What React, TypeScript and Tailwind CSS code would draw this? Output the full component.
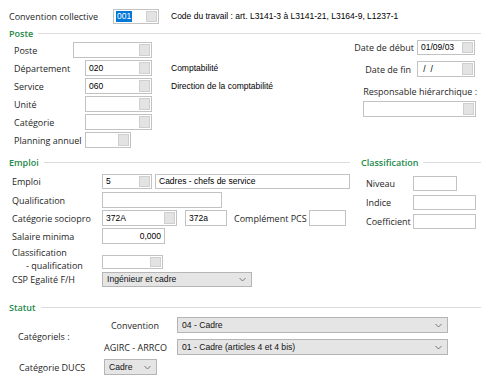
import React from 'react';
import clsx from 'clsx';

const lbl = "text-[9px] leading-none text-[#262626] whitespace-nowrap";
const val = "font-['Liberation_Sans',Arial,sans-serif] text-[8.5px] leading-none text-black whitespace-nowrap";
const sel = "font-['Liberation_Sans',Arial,sans-serif] text-[8.6px] leading-none text-[#111] whitespace-nowrap";

type BoxProps = { className?: string; btn?: boolean; right?: boolean; children?: React.ReactNode };

// lookup field, with the little grey button on the right
const Box: React.FC<BoxProps> = ({ className, btn, right, children }) => (
  <div className={clsx("flex items-stretch h-full border border-[#c2c2c2] bg-white", className)}>
    <div className={clsx("flex-1 flex items-center px-[3px] overflow-hidden", val, right && "justify-end")}>{children}</div>
    {btn && <div className="w-[11px] my-[1px] mr-[1px] border border-[#cfcfcf] bg-[#e3e3e3]" />}
  </div>
);

const Select: React.FC<{ className?: string; children?: React.ReactNode }> = ({ className, children }) => (
  <div className={clsx("flex items-center h-full border border-[#b5b5b5] bg-[#e5e5e5] pl-[4px] pr-[5px]", className)}>
    <span className={clsx("flex-1", sel)}>{children}</span>
    <svg width="7" height="5" viewBox="0 0 7 5" fill="none">
      <path d="M0.5 1 L3.5 4 L6.5 1" stroke="#6b6b6b" strokeWidth="0.9" />
    </svg>
  </div>
);

const Heading: React.FC<{ title: string; className?: string }> = ({ title, className }) => (
  <div className={clsx("flex items-center h-[12px]", className)}>
    <span className="text-[9px] leading-none font-semibold text-[#23894a]">{title}</span>
    <div className="flex-1 h-px bg-[#dcdcdc] ml-[5px]" />
  </div>
);

export default function App() {
  return (
    <div className="w-[489px] h-[381px] bg-white overflow-hidden font-['Open_Sans','Noto_Sans',sans-serif]">
      {/* Convention collective */}
      <div className="flex items-center h-[15px] mt-[9px] pl-[9px]">
        <span className={clsx(lbl, "w-[104px]")}>Convention collective</span>
        <div className="flex items-stretch h-full w-[46px] border border-[#c2c2c2] bg-white">
          <div className="flex-1 flex items-center pl-[2px]">
            <span className={clsx(val, "bg-[#0078d7] text-white px-[1px] py-[1px]")}>001</span>
          </div>
          <div className="w-[11px] my-[1px] mr-[1px] border border-[#cfcfcf] bg-[#e3e3e3]" />
        </div>
        <span className={clsx(val, "ml-[12px]")}>Code du travail : art. L3141-3 à L3141-21, L3164-9, L1237-1</span>
      </div>

      {/* Poste */}
      <Heading title="Poste" className="mt-[3px] pl-[9px] pr-[8px]" />
      <div className="flex h-[117px]">
        <div className="w-[360px] pt-[3px] pl-[14px] flex flex-col gap-[2px]">
          <div className="flex items-center h-[16px]">
            <span className={clsx(lbl, "w-[59px]")}>Poste</span>
            <Box className="w-[79px]" btn />
          </div>
          <div className="flex items-center h-[16px]">
            <span className={clsx(lbl, "w-[71px]")}>Département</span>
            <Box className="w-[67px]" btn>020</Box>
            <span className={clsx(val, "ml-[19px]")}>Comptabilité</span>
          </div>
          <div className="flex items-center h-[16px]">
            <span className={clsx(lbl, "w-[71px]")}>Service</span>
            <Box className="w-[67px]" btn>060</Box>
            <span className={clsx(val, "ml-[19px]")}>Direction de la comptabilité</span>
          </div>
          <div className="flex items-center h-[16px]">
            <span className={clsx(lbl, "w-[71px]")}>Unité</span>
            <Box className="w-[67px]" btn />
          </div>
          <div className="flex items-center h-[16px]">
            <span className={clsx(lbl, "w-[71px]")}>Catégorie</span>
            <Box className="w-[67px]" btn />
          </div>
          <div className="flex items-center h-[16px]">
            <span className={clsx(lbl, "w-[71px]")}>Planning annuel</span>
            <Box className="w-[46px]" btn />
          </div>
        </div>
        <div className="flex-1 pt-[1px] flex flex-col">
          <div className="flex items-center justify-end h-[15px] pr-[14px]">
            <span className={lbl}>Date de début</span>
            <Box className="w-[58px] ml-[3px]" btn>01/09/03</Box>
          </div>
          <div className="flex items-center justify-end h-[16px] mt-[6px] pr-[14px]">
            <span className={lbl}>Date de fin</span>
            <Box className="w-[58px] ml-[6px]" btn>&nbsp;/&nbsp;&nbsp;/</Box>
          </div>
          <div className="h-[12px] mt-[8px] pl-[9px] flex items-center">
            <span className={lbl}>Responsable hiérarchique :</span>
          </div>
          <div className="h-[16px] mt-[4px] pl-[9px]">
            <Box className="w-[113px]" btn />
          </div>
        </div>
      </div>

      {/* Emploi + Classification */}
      <div className="flex h-[145px]">
        <div className="w-[355px] flex flex-col">
          <Heading title="Emploi" className="pl-[9px] pr-[5px]" />
          <div className="flex items-center h-[15px] mt-[6px] pl-[12px]">
            <span className={clsx(lbl, "w-[90px]")}>Emploi</span>
            <Box className="w-[50px]" btn>5</Box>
            <Box className="w-[195px] ml-[3px]">Cadres - chefs de service</Box>
          </div>
          <div className="flex items-center h-[16px] mt-[3px] pl-[12px]">
            <span className={clsx(lbl, "w-[90px]")}>Qualification</span>
            <Box className="w-[120px]" />
          </div>
          <div className="flex items-center h-[16px] mt-[2px] pl-[12px]">
            <span className={clsx(lbl, "w-[90px]")}>Catégorie sociopro</span>
            <Box className="w-[75px]" btn>372A</Box>
            <Box className="w-[42px] ml-[8px]">372a</Box>
            <span className={clsx(lbl, "w-[75px] ml-[7px]")}>Complément PCS</span>
            <Box className="w-[37px]" />
          </div>
          <div className="flex items-center h-[16px] mt-[2px] pl-[12px]">
            <span className={clsx(lbl, "w-[90px]")}>Salaire minima</span>
            <Box className="w-[63px]" right>0,000</Box>
          </div>
          <div className="flex items-end h-[24px] mt-[3px] pl-[12px]">
            <div className={clsx(lbl, "w-[90px] flex flex-col gap-[4px] self-stretch justify-center")}>
              <span>Classification</span>
              <span className="pl-[14px]">- qualification</span>
            </div>
            <div className="h-[14px] mb-[2px]">
              <Box className="w-[61px]" btn />
            </div>
          </div>
          <div className="flex items-center h-[15px] mt-[1px] pl-[12px]">
            <span className={clsx(lbl, "w-[90px]")}>CSP Egalité F/H</span>
            <Select className="w-[150px]">Ingénieur et cadre</Select>
          </div>
        </div>
        <div className="flex-1 flex flex-col">
          <Heading title="Classification" className="pl-[6px] pr-[8px]" />
          <div className="flex items-center h-[15px] mt-[8px] pl-[11px]">
            <span className={clsx(lbl, "w-[47px]")}>Niveau</span>
            <Box className="w-[44px]" />
          </div>
          <div className="flex items-center h-[15px] mt-[4px] pl-[11px]">
            <span className={clsx(lbl, "w-[47px]")}>Indice</span>
            <Box className="w-[63px]" />
          </div>
          <div className="flex items-center h-[15px] mt-[4px] pl-[11px]">
            <span className={clsx(lbl, "w-[47px]")}>Coefficient</span>
            <Box className="w-[63px]" />
          </div>
        </div>
      </div>

      {/* Statut */}
      <Heading title="Statut" className="pl-[9px] pr-[8px]" />
      <div className="flex mt-[4px]">
        <div className="w-[104px] pl-[18px] flex items-center">
          <span className={lbl}>Catégoriels :</span>
        </div>
        <div className="flex flex-col">
          <div className="flex items-center h-[16px]">
            <span className={clsx(lbl, "w-[62px] text-center")}>Convention</span>
            <Select className="w-[271px] ml-[11px]">04 - Cadre</Select>
          </div>
          <div className="flex items-center h-[16px] mt-[6px]">
            <span className={clsx(lbl, "w-[62px] text-center")}>AGIRC - ARRCO</span>
            <Select className="w-[271px] ml-[11px]">01 - Cadre (articles 4 et 4 bis)</Select>
          </div>
        </div>
      </div>
      <div className="flex items-center h-[16px] mt-[4px] pl-[19px]">
        <span className={clsx(lbl, "w-[85px]")}>Catégorie DUCS</span>
        <Select className="w-[53px]">Cadre</Select>
      </div>
    </div>
  );
}
